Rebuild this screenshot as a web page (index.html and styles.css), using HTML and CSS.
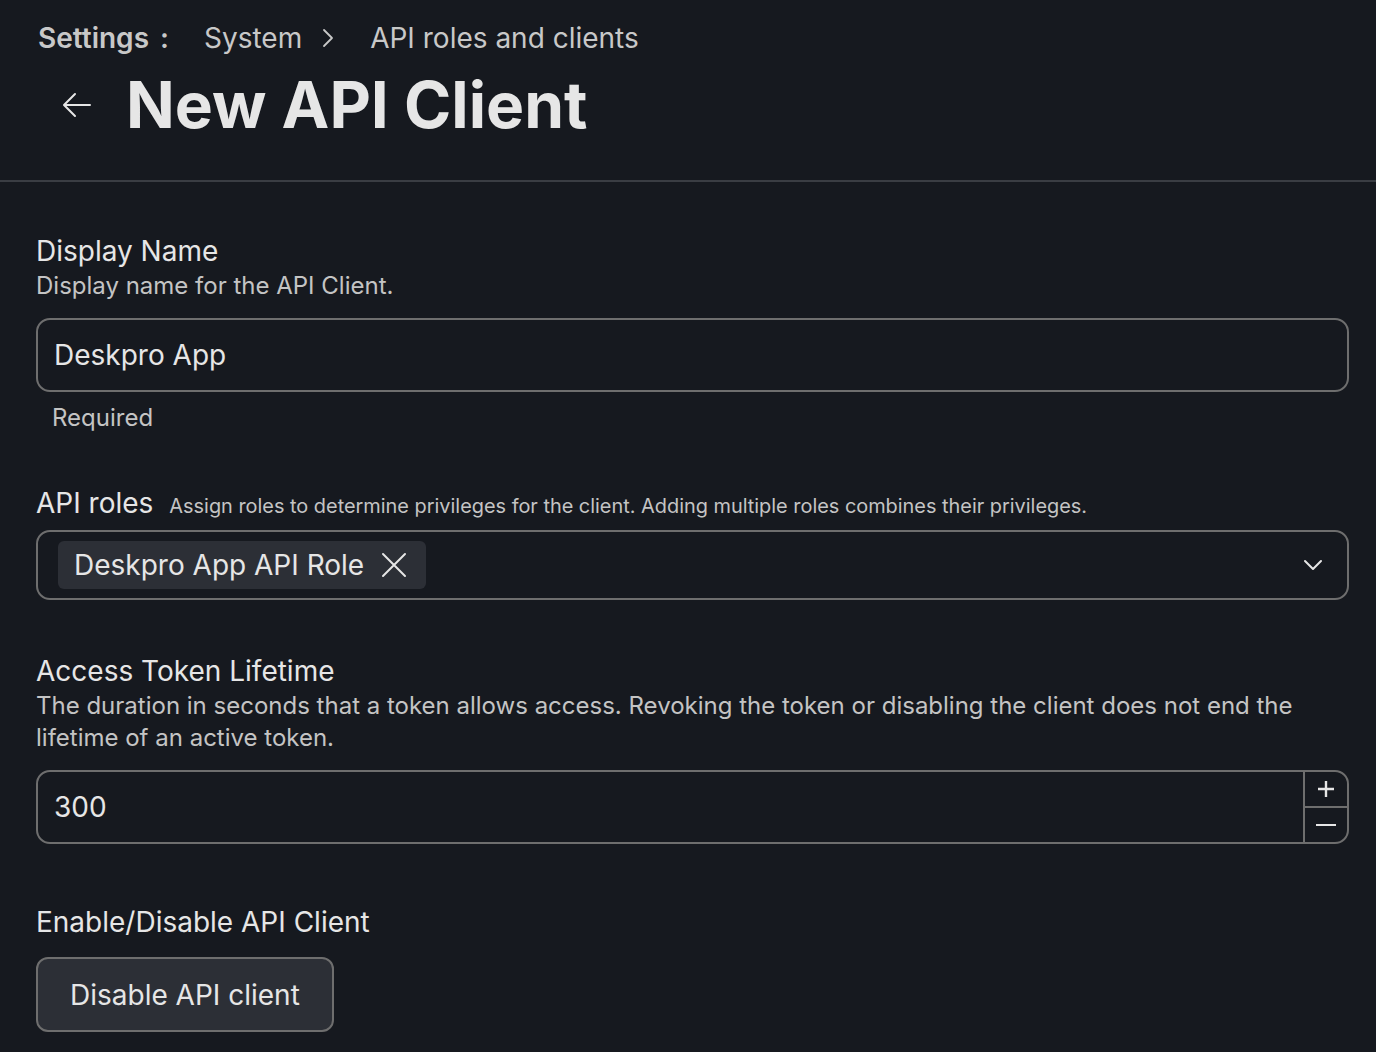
FILE: index.html
```html
<!DOCTYPE html>
<html lang="en">
<head>
<meta charset="utf-8">
<title>New API Client</title>
<link rel="stylesheet" href="styles.css">
</head>
<body>
<header class="page-header">
  <nav class="breadcrumb">
    <span class="crumb-root">Settings</span>
    <span class="crumb-colon">:</span>
    <span class="crumb">System</span>
    <svg class="crumb-chevron" width="12" height="20" viewBox="0 0 12 20"><path d="M2 2 L10 10 L2 18" fill="none" stroke="#c8c8c8" stroke-width="1.8" stroke-linecap="round" stroke-linejoin="round"/></svg>
    <span class="crumb">API roles and clients</span>
  </nav>
  <div class="title-row">
    <svg class="back-arrow" width="30" height="26" viewBox="0 0 30 26"><path d="M28 13 H3 M13 2 L2 13 L13 24" fill="none" stroke="#e6e6e6" stroke-width="2" stroke-linecap="round" stroke-linejoin="round"/></svg>
    <h1 class="title">New API Client</h1>
  </div>
</header>
<main class="form">
  <section class="field">
    <div class="label">Display Name</div>
    <div class="desc">Display name for the API Client.</div>
    <div class="input">Deskpro App</div>
    <div class="hint">Required</div>
  </section>
  <section class="field field-roles">
    <div class="label-row">
      <span class="label">API roles</span>
      <span class="help">Assign roles to determine privileges for the client. Adding multiple roles combines their privileges.</span>
    </div>
    <div class="select">
      <span class="chip">Deskpro App API Role
        <svg class="chip-x" width="26" height="26" viewBox="0 0 26 26"><path d="M2 2 L24 24 M24 2 L2 24" stroke="#e6e6e6" stroke-width="2" stroke-linecap="round"/></svg>
      </span>
      <svg class="select-chevron" width="20" height="12" viewBox="0 0 20 12"><path d="M2 2 L10 10 L18 2" fill="none" stroke="#e6e6e6" stroke-width="2" stroke-linecap="round" stroke-linejoin="round"/></svg>
    </div>
  </section>
  <section class="field field-token">
    <div class="label">Access Token Lifetime</div>
    <div class="desc">The duration in seconds that a token allows access. Revoking the token or disabling the client does not end the lifetime of an active token.</div>
    <div class="number">
      <span class="number-value">300</span>
      <div class="stepper">
        <div class="step"><svg width="18" height="18" viewBox="0 0 18 18"><path d="M9 1 V17 M1 9 H17" stroke="#e6e6e6" stroke-width="2.4"/></svg></div>
        <div class="step"><svg width="22" height="4" viewBox="0 0 22 4"><path d="M1 2 H21" stroke="#e6e6e6" stroke-width="2"/></svg></div>
      </div>
    </div>
  </section>
  <section class="field field-last">
    <div class="label">Enable/Disable API Client</div>
    <button class="btn">Disable API client</button>
  </section>
</main>
</body>
</html>
```
FILE: styles.css
```css
* { box-sizing: border-box; }
html, body { margin: 0; padding: 0; }
body {
  background: #16191f;
  color: #e6e6e6;
  font-family: Inter, "Noto Sans", sans-serif;
  width: 1376px;
  height: 1052px;
  overflow: hidden;
}
.page-header {
  padding: 21px 0 37px 38px;
  border-bottom: 2px solid #3a3d43;
}
.breadcrumb {
  display: flex;
  align-items: center;
  height: 34px;
  font-size: 28px;
  line-height: 34px;
  color: #c8c8c8;
}
.crumb-root { font-weight: 600; }
.crumb-colon { font-weight: 600; margin-left: 11px; margin-right: 35px; }
.crumb-chevron { margin: 0 36px 0 20px; }
.title-row {
  display: flex;
  align-items: center;
  margin-top: 12px;
  padding-left: 24px;
}
.back-arrow { margin-right: 34px; }
.title {
  margin: 0;
  font-size: 64px;
  line-height: 76px;
  font-weight: 700;
  color: #e6e6e6;
}
.form {
  padding: 52px 27px 0 36px;
  display: flex;
  flex-direction: column;
}
.field { margin-bottom: 52px; }
.field-roles { margin-bottom: 54px; }
.field-token { margin-bottom: 53px; }
.label {
  font-size: 28px;
  line-height: 34px;
  color: #e6e6e6;
}
.desc {
  margin-top: 2px;
  font-size: 24px;
  line-height: 32px;
  color: #c4c4c4;
}
.input {
  margin-top: 16px;
  height: 74px;
  border: 2px solid #6e6e6e;
  border-radius: 14px;
  padding: 0 16px;
  display: flex;
  align-items: center;
  font-size: 28px;
  color: #e6e6e6;
}
.hint {
  margin-top: 10px;
  padding-left: 16px;
  font-size: 24px;
  line-height: 32px;
  color: #c4c4c4;
}
.label-row {
  display: flex;
  align-items: baseline;
  gap: 16px;
}
.help {
  font-size: 19.9px;
  color: #c4c4c4;
}
.select {
  margin-top: 10px;
  height: 70px;
  border: 2px solid #6e6e6e;
  border-radius: 14px;
  padding: 0 24px 0 20px;
  display: flex;
  align-items: center;
  justify-content: space-between;
}
.chip {
  display: inline-flex;
  align-items: center;
  height: 48px;
  padding: 0 19px 0 16px;
  background: #2c2f36;
  border-radius: 6px;
  font-size: 28px;
  color: #e6e6e6;
}
.chip-x { margin-left: 17px; }
.number {
  margin-top: 16px;
  height: 74px;
  border: 2px solid #6e6e6e;
  border-radius: 14px;
  display: flex;
  align-items: stretch;
  overflow: hidden;
}
.number-value {
  flex: 1;
  display: flex;
  align-items: center;
  padding-left: 16px;
  font-size: 28px;
  color: #e6e6e6;
}
.stepper {
  width: 44px;
  border-left: 2px solid #6e6e6e;
  display: flex;
  flex-direction: column;
}
.step {
  flex: 1;
  display: flex;
  align-items: center;
  justify-content: center;
}
.step + .step { border-top: 2px solid #6e6e6e; }
.field-last { margin-top: 8px; }
.btn {
  margin-top: 18px;
  height: 75px;
  padding: 0 32px;
  background: #2c2f36;
  border: 2px solid #6e6e6e;
  border-radius: 12px;
  font-family: Inter, "Noto Sans", sans-serif;
  font-size: 28px;
  color: #e6e6e6;
}
```
